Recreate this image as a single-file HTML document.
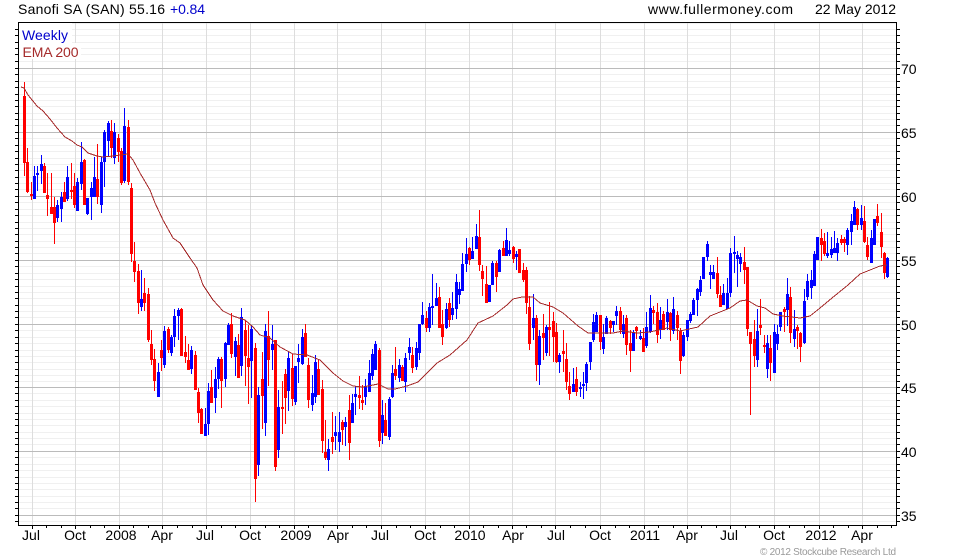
<!DOCTYPE html>
<html><head><meta charset="utf-8"><title>Sanofi SA</title>
<style>html,body{margin:0;padding:0;background:#fff}svg{display:block}text{font-family:"Liberation Sans",Arial,sans-serif;font-size:14px;fill:#000}</style>
</head><body>
<svg width="980" height="560" viewBox="0 0 980 560" xmlns="http://www.w3.org/2000/svg">
<g shape-rendering="crispEdges" fill="none">
<path stroke="#f0f0f0" d="M19 23.5H896M19 29.5H896M19 35.5H896M19 42.5H896M19 48.5H896M19 54.5H896M19 61.5H896M19 74.5H896M19 81.5H896M19 87.5H896M19 94.5H896M19 100.5H896M19 106.5H896M19 113.5H896M19 119.5H896M19 125.5H896M19 138.5H896M19 145.5H896M19 151.5H896M19 158.5H896M19 164.5H896M19 170.5H896M19 177.5H896M19 183.5H896M19 189.5H896M19 202.5H896M19 209.5H896M19 215.5H896M19 222.5H896M19 228.5H896M19 234.5H896M19 241.5H896M19 247.5H896M19 253.5H896M19 266.5H896M19 273.5H896M19 279.5H896M19 286.5H896M19 292.5H896M19 298.5H896M19 305.5H896M19 311.5H896M19 317.5H896M19 330.5H896M19 337.5H896M19 343.5H896M19 350.5H896M19 356.5H896M19 362.5H896M19 369.5H896M19 375.5H896M19 381.5H896M19 393.5H896M19 400.5H896M19 406.5H896M19 413.5H896M19 419.5H896M19 425.5H896M19 432.5H896M19 438.5H896M19 444.5H896M19 457.5H896M19 464.5H896M19 470.5H896M19 477.5H896M19 483.5H896M19 489.5H896M19 496.5H896M19 502.5H896M19 508.5H896M19 521.5H896"/>
<path stroke="#dddddd" d="M32.5 23V525M75.5 23V525M119.5 23V525M162.5 23V525M206.5 23V525M250.5 23V525M294.5 23V525M337.5 23V525M381.5 23V525M425.5 23V525M469.5 23V525M512.5 23V525M555.5 23V525M600.5 23V525M644.5 23V525M687.5 23V525M730.5 23V525M774.5 23V525M819.5 23V525M862.5 23V525"/>
<path stroke="#bbbbbb" d="M19 68.5H896M19 132.5H896M19 196.5H896M19 260.5H896M19 324.5H896M19 387.5H896M19 451.5H896M19 515.5H896"/>
<rect x="19" y="23" width="53" height="20" fill="#fff"/>
<rect x="19" y="43" width="62" height="16" fill="#fff"/>
<path stroke="#ff0000" d="M24.5 82V176M27.5 148V193M31.5 182V200M44.5 163V193M47.5 173V216M51.5 173V214M54.5 197V244M64.5 182V202M71.5 163V199M74.5 173V208M84.5 159V205M97.5 144V204M111.5 120V158M118.5 134V162M121.5 148V185M128.5 120V185M131.5 183V262M134.5 242V282M138.5 264V314M144.5 278V311M148.5 288V342M151.5 330V365M154.5 349V391M161.5 340V371M168.5 327V353M181.5 308V356M185.5 336V363M188.5 344V370M195.5 351V390M198.5 388V423M201.5 408V434M211.5 370V403M221.5 357V408M231.5 313V358M238.5 334V378M245.5 320V386M248.5 325V404M255.5 343V502M262.5 352V429M268.5 311V386M275.5 340V471M282.5 381V434M285.5 369V424M292.5 354V406M305.5 324V357M308.5 358V408M318.5 360V395M322.5 380V453M325.5 420V460M332.5 412V454M342.5 420V445M349.5 395V460M359.5 376V409M362.5 385V410M379.5 348V447M385.5 403V436M395.5 347V380M402.5 365V381M412.5 347V373M426.5 311V332M439.5 287V328M442.5 310V345M449.5 298V327M469.5 247V265M479.5 210V271M482.5 265V296M486.5 266V303M496.5 261V292M503.5 241V256M513.5 246V263M519.5 249V273M523.5 263V282M526.5 267V314M529.5 296V350M536.5 315V381M543.5 314V360M549.5 302V356M553.5 312V362M556.5 323V363M563.5 330V372M566.5 343V390M569.5 372V400M576.5 367V396M600.5 315V350M610.5 320V334M620.5 307V334M626.5 315V355M630.5 330V372M636.5 326V339M643.5 328V352M653.5 306V324M657.5 303V343M663.5 311V330M670.5 312V341M677.5 311V340M680.5 328V374M717.5 257V298M720.5 286V307M744.5 247V284M747.5 267V336M750.5 332V415M754.5 320V367M760.5 299V335M764.5 335V353M770.5 335V381M784.5 307V332M790.5 287V343M797.5 325V349M800.5 332V362M821.5 229V261M824.5 233V256M841.5 235V245M844.5 237V252M857.5 208V230M864.5 206V243M867.5 237V260M877.5 204V226M881.5 213V258M884.5 252V279"/>
<path stroke="#0000ff" d="M34.5 166V199M37.5 166V191M41.5 155V184M57.5 200V222M61.5 192V222M67.5 166V201M77.5 178V211M81.5 142V190M87.5 198V215M91.5 182V220M94.5 157V197M101.5 157V213M104.5 130V187M108.5 121V157M114.5 123V164M124.5 108V183M141.5 270V311M158.5 363V397M164.5 326V368M171.5 335V356M174.5 309V347M178.5 308V340M191.5 346V374M205.5 408V436M208.5 383V435M215.5 367V413M218.5 357V389M225.5 342V387M228.5 323V345M235.5 337V376M241.5 308V376M251.5 325V398M258.5 387V476M265.5 324V436M272.5 325V370M278.5 390V458M288.5 352V411M295.5 366V405M298.5 344V383M302.5 329V365M312.5 375V411M315.5 355V403M328.5 439V471M335.5 416V450M339.5 412V452M345.5 417V446M352.5 394V423M355.5 386V415M365.5 379V405M369.5 360V392M372.5 349V380M375.5 341V370M382.5 400V444M389.5 397V440M392.5 365V398M399.5 359V382M405.5 353V392M409.5 338V360M416.5 342V370M419.5 324V360M422.5 302V325M429.5 303V332M432.5 274V325M436.5 283V306M446.5 303V329M452.5 292V320M456.5 274V319M459.5 282V304M462.5 253V291M466.5 238V272M472.5 237V259M476.5 224V249M489.5 285V302M492.5 261V285M499.5 249V272M506.5 228V256M509.5 241V256M516.5 251V270M533.5 294V340M539.5 330V385M546.5 325V356M559.5 353V373M573.5 368V392M580.5 382V397M583.5 372V399M586.5 362V391M590.5 342V370M593.5 314V342M596.5 312V332M603.5 324V354M606.5 316V334M613.5 321V332M616.5 306V325M623.5 315V338M633.5 330V351M640.5 330V340M646.5 312V348M650.5 295V333M660.5 307V339M667.5 299V330M673.5 297V334M683.5 332V357M687.5 320V341M690.5 312V323M693.5 298V315M697.5 288V316M700.5 276V296M703.5 257V279M707.5 241V261M710.5 265V289M713.5 265V279M723.5 284V305M727.5 278V309M730.5 248V297M734.5 236V273M737.5 251V287M740.5 253V272M757.5 309V367M767.5 335V378M774.5 324V373M777.5 325V350M780.5 312V331M787.5 278V326M794.5 310V347M804.5 289V344M807.5 274V300M811.5 270V299M814.5 251V286M817.5 237V260M827.5 232V258M831.5 237V258M834.5 231V253M837.5 238V261M847.5 228V255M851.5 214V245M854.5 201V225M861.5 205V230M871.5 230V263M874.5 219V245M887.5 257V278"/>
<path stroke="#ff0000" stroke-width="3" d="M24.5 96V163M27.5 162V192M31.5 194V196M44.5 166V193M47.5 195V199M51.5 207V214M54.5 207V223M64.5 192V202M71.5 190V192M74.5 186V205M84.5 160V205M97.5 179V197M111.5 131V148M118.5 138V152M121.5 151V183M128.5 127V182M131.5 188V254M134.5 261V272M138.5 271V303M144.5 293V303M148.5 294V340M151.5 344V360M154.5 359V381M161.5 350V358M168.5 329V350M181.5 309V356M185.5 352V357M188.5 360V370M195.5 355V390M198.5 392V413M201.5 409V434M211.5 387V403M221.5 359V381M231.5 324V354M238.5 345V378M245.5 330V356M248.5 358V367M255.5 348V479M262.5 379V396M268.5 336V360M275.5 340V467M282.5 407V409M285.5 374V398M292.5 368V399M305.5 333V357M308.5 365V400M318.5 369V395M322.5 389V441M325.5 452V458M332.5 437V442M342.5 422V430M349.5 410V443M359.5 395V398M362.5 400V403M379.5 350V441M385.5 420V436M395.5 369V376M402.5 367V381M412.5 355V368M426.5 318V328M439.5 297V328M442.5 324V337M449.5 303V320M469.5 248V260M479.5 237V265M482.5 271V279M486.5 284V303M496.5 263V277M503.5 248V256M513.5 247V259M519.5 249V273M523.5 270V280M526.5 270V303M529.5 307V344M536.5 318V365M543.5 333V338M549.5 327V330M553.5 321V337M556.5 332V362M563.5 351V354M566.5 359V382M569.5 386V394M576.5 379V392M600.5 315V342M610.5 321V328M620.5 311V330M626.5 318V345M630.5 343V351M636.5 327V331M643.5 338V352M653.5 310V313M657.5 312V335M663.5 314V330M670.5 313V330M677.5 315V328M680.5 331V361M717.5 273V294M720.5 295V307M744.5 262V270M747.5 267V329M750.5 332V344M754.5 339V356M760.5 325V328M764.5 345V347M770.5 348V363M784.5 309V312M790.5 297V333M797.5 327V331M800.5 333V347M821.5 238V245M824.5 241V254M841.5 239V243M844.5 239V243M857.5 209V225M864.5 221V242M867.5 245V257M877.5 216V223M881.5 232V247M884.5 253V273"/>
<path stroke="#0000ff" stroke-width="3" d="M34.5 176V199M37.5 173V175M41.5 164V171M57.5 205V218M61.5 197V209M67.5 177V199M77.5 182V211M81.5 162V184M87.5 198V214M91.5 188V197M94.5 177V197M101.5 162V205M104.5 132V162M108.5 123V141M114.5 132V158M124.5 126V181M141.5 299V307M158.5 372V397M164.5 331V365M171.5 337V353M174.5 316V337M178.5 310V316M191.5 350V369M205.5 424V436M208.5 391V424M215.5 379V398M218.5 359V379M225.5 343V379M228.5 325V345M235.5 341V357M241.5 317V366M251.5 329V361M258.5 395V465M265.5 331V423M272.5 344V350M278.5 407V450M288.5 358V391M295.5 366V402M298.5 358V362M302.5 337V364M312.5 393V405M315.5 362V397M328.5 449V460M335.5 432V436M339.5 432V442M345.5 422V427M352.5 403V423M355.5 394V397M365.5 386V397M369.5 373V392M372.5 354V376M375.5 344V370M382.5 415V433M389.5 399V437M392.5 373V397M399.5 365V378M405.5 358V382M409.5 347V353M416.5 348V367M419.5 324V353M422.5 315V324M429.5 307V328M432.5 306V308M436.5 298V306M446.5 309V328M452.5 308V315M456.5 282V309M459.5 289V295M462.5 264V291M466.5 254V264M472.5 251V259M476.5 236V249M489.5 285V302M492.5 263V285M499.5 250V272M506.5 240V256M509.5 250V254M516.5 254V257M533.5 318V328M539.5 336V365M546.5 327V353M559.5 355V362M573.5 384V392M580.5 387V389M583.5 384V386M586.5 364V383M590.5 342V362M593.5 322V340M596.5 315V332M603.5 337V349M606.5 318V334M613.5 321V325M616.5 311V316M623.5 324V334M633.5 333V351M640.5 336V339M646.5 327V346M650.5 308V332M660.5 320V330M667.5 312V322M673.5 309V331M683.5 335V356M687.5 320V337M690.5 314V321M693.5 300V315M697.5 289V300M700.5 280V292M703.5 257V279M707.5 244V257M710.5 272V275M713.5 272V279M723.5 293V305M727.5 293V309M730.5 253V293M734.5 252V254M737.5 255V259M740.5 257V264M757.5 331V360M767.5 343V369M774.5 332V373M777.5 334V344M780.5 312V327M787.5 294V310M794.5 329V339M804.5 301V343M807.5 281V297M811.5 280V288M814.5 254V286M817.5 237V260M827.5 253V256M831.5 249V255M834.5 248V253M837.5 243V253M847.5 230V245M851.5 221V232M854.5 207V225M861.5 218V225M871.5 238V263M874.5 219V245M887.5 258V277"/>
<polyline stroke="#a52a2a" points="21,87 24,88 28,95 37,106 43,111 50,119 57,128 65,137 72,141 77,145 82,147 88,153 97,156 103,157 113,156 128,154 133,160 140,173 150,190 155,203 163,220 173,238 180,243 190,258 197,268 203,285 213,300 223,311 233,316 245,320 253,327 260,335 270,338 280,347 293,354 307,355 320,360 333,373 343,381 353,386 363,387 373,385 378,384 388,389 395,389 407,386 418,382 427,373 437,363 450,355 467,340 478,323 493,316 507,305 513,299 522,297 533,297 540,303 553,307 563,313 578,326 588,333 613,333 623,331 637,333 650,332 667,328 680,331 698,327 710,316 720,312 730,308 740,301 747,300 757,306 765,308 773,314 783,316 800,318 810,316 820,308 832,298 848,285 860,274 870,270 880,266 887,265"/>
<rect x="18.5" y="22.5" width="878" height="503" stroke="#000"/>
<path stroke="#000" d="M15 29.5h3M15 35.5h3M15 42.5h3M15 48.5h3M15 54.5h3M15 61.5h3M15 68.5h3M15 74.5h3M15 81.5h3M15 87.5h3M15 94.5h3M15 100.5h3M15 106.5h3M15 113.5h3M15 119.5h3M15 125.5h3M15 132.5h3M15 138.5h3M15 145.5h3M15 151.5h3M15 158.5h3M15 164.5h3M15 170.5h3M15 177.5h3M15 183.5h3M15 189.5h3M15 196.5h3M15 202.5h3M15 209.5h3M15 215.5h3M15 222.5h3M15 228.5h3M15 234.5h3M15 241.5h3M15 247.5h3M15 253.5h3M15 260.5h3M15 266.5h3M15 273.5h3M15 279.5h3M15 286.5h3M15 292.5h3M15 298.5h3M15 305.5h3M15 311.5h3M15 317.5h3M15 324.5h3M15 330.5h3M15 337.5h3M15 343.5h3M15 350.5h3M15 356.5h3M15 362.5h3M15 369.5h3M15 375.5h3M15 381.5h3M15 387.5h3M15 393.5h3M15 400.5h3M15 406.5h3M15 413.5h3M15 419.5h3M15 425.5h3M15 432.5h3M15 438.5h3M15 444.5h3M15 451.5h3M15 457.5h3M15 464.5h3M15 470.5h3M15 477.5h3M15 483.5h3M15 489.5h3M15 496.5h3M15 502.5h3M15 508.5h3M15 515.5h3M15 521.5h3"/>
<path stroke="#000" d="M897 29.5h3M897 35.5h3M897 42.5h3M897 48.5h3M897 54.5h3M897 61.5h3M897 68.5h3M897 74.5h3M897 81.5h3M897 87.5h3M897 94.5h3M897 100.5h3M897 106.5h3M897 113.5h3M897 119.5h3M897 125.5h3M897 132.5h3M897 138.5h3M897 145.5h3M897 151.5h3M897 158.5h3M897 164.5h3M897 170.5h3M897 177.5h3M897 183.5h3M897 189.5h3M897 196.5h3M897 202.5h3M897 209.5h3M897 215.5h3M897 222.5h3M897 228.5h3M897 234.5h3M897 241.5h3M897 247.5h3M897 253.5h3M897 260.5h3M897 266.5h3M897 273.5h3M897 279.5h3M897 286.5h3M897 292.5h3M897 298.5h3M897 305.5h3M897 311.5h3M897 317.5h3M897 324.5h3M897 330.5h3M897 337.5h3M897 343.5h3M897 350.5h3M897 356.5h3M897 362.5h3M897 369.5h3M897 375.5h3M897 381.5h3M897 387.5h3M897 393.5h3M897 400.5h3M897 406.5h3M897 413.5h3M897 419.5h3M897 425.5h3M897 432.5h3M897 438.5h3M897 444.5h3M897 451.5h3M897 457.5h3M897 464.5h3M897 470.5h3M897 477.5h3M897 483.5h3M897 489.5h3M897 496.5h3M897 502.5h3M897 508.5h3M897 515.5h3M897 521.5h3"/>
<path stroke="#000" d="M32.5 526v3M46.5 526v2M61.5 526v2M75.5 526v3M90.5 526v2M104.5 526v2M119.5 526v3M133.5 526v2M148.5 526v2M162.5 526v3M177.5 526v2M192.5 526v2M206.5 526v3M221.5 526v2M235.5 526v2M250.5 526v3M265.5 526v2M279.5 526v2M294.5 526v3M308.5 526v2M323.5 526v2M337.5 526v3M352.5 526v2M366.5 526v2M381.5 526v3M396.5 526v2M410.5 526v2M425.5 526v3M440.5 526v2M454.5 526v2M469.5 526v3M483.5 526v2M498.5 526v2M512.5 526v3M526.5 526v2M541.5 526v2M555.5 526v3M570.5 526v2M585.5 526v2M600.5 526v3M615.5 526v2M629.5 526v2M644.5 526v3M658.5 526v2M673.5 526v2M687.5 526v3M701.5 526v2M716.5 526v2M730.5 526v3M745.5 526v2M759.5 526v2M774.5 526v3M789.5 526v2M804.5 526v2M819.5 526v3M833.5 526v2M848.5 526v2M862.5 526v3M877.5 526v2M891.5 526v2"/>
</g>
<text x="18" y="14" textLength="147" lengthAdjust="spacing">Sanofi SA (SAN) 55.16</text>
<text x="170" y="14" textLength="35" lengthAdjust="spacing" style="fill:#0000cc">+0.84</text>
<text x="648" y="14" textLength="145" lengthAdjust="spacing">www.fullermoney.com</text>
<text x="815" y="14" textLength="81" lengthAdjust="spacing">22 May 2012</text>
<text x="22" y="40" textLength="46" lengthAdjust="spacing" style="fill:#0000cc">Weekly</text>
<text x="22.500" y="57" textLength="56" lengthAdjust="spacing" style="fill:#a52a2a">EMA 200</text>
<text x="901" y="74">70</text><text x="901" y="138">65</text><text x="901" y="202">60</text><text x="901" y="266">55</text><text x="901" y="330">50</text><text x="901" y="393">45</text><text x="901" y="457">40</text><text x="901" y="521">35</text>
<g text-anchor="middle">
<text x="31" y="540">Jul</text><text x="75" y="540">Oct</text><text x="121" y="540">2008</text><text x="162" y="540">Apr</text><text x="205" y="540">Jul</text><text x="250" y="540">Oct</text><text x="296" y="540">2009</text><text x="338" y="540">Apr</text><text x="380" y="540">Jul</text><text x="425" y="540">Oct</text><text x="470" y="540">2010</text><text x="513" y="540">Apr</text><text x="556" y="540">Jul</text><text x="600" y="540">Oct</text><text x="645" y="540">2011</text><text x="687" y="540">Apr</text><text x="729" y="540">Jul</text><text x="774" y="540">Oct</text><text x="821" y="540">2012</text><text x="862" y="540">Apr</text>
</g>
<text x="760" y="555" textLength="136" lengthAdjust="spacing" style="font-size:10px;fill:#999999">© 2012 Stockcube Research Ltd</text>
</svg>
</body></html>
